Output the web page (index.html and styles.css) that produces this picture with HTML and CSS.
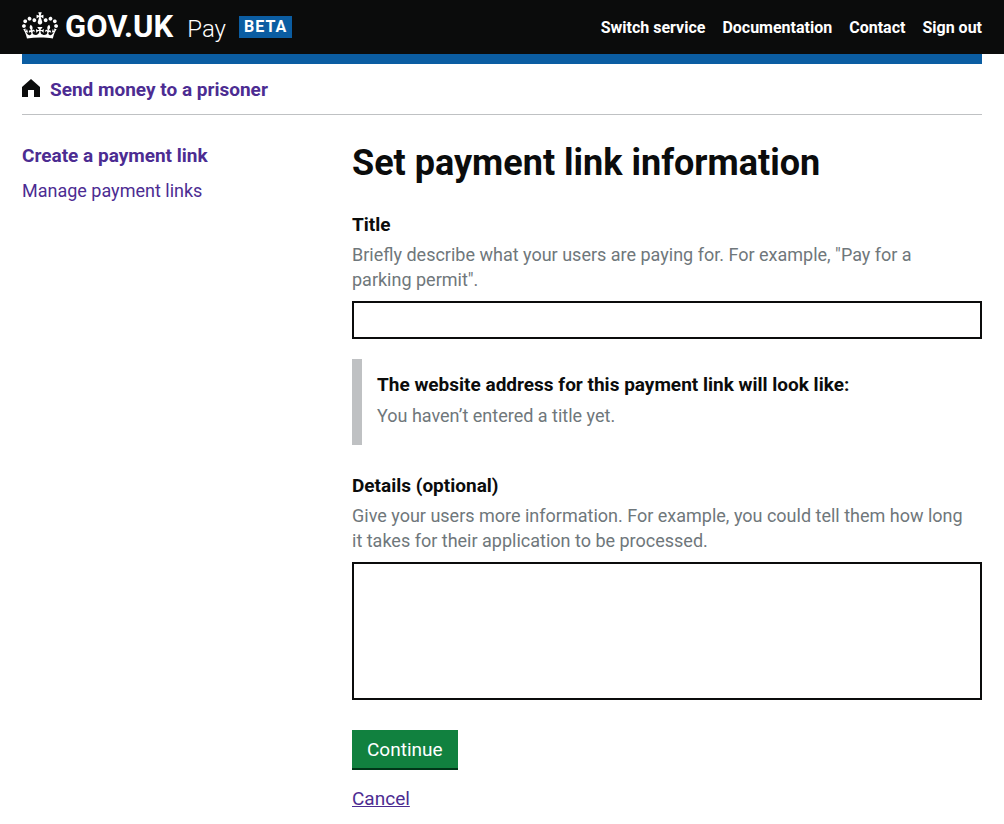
FILE: index.html
```html
<!DOCTYPE html>
<html lang="en">
<head>
<meta charset="utf-8">
<meta name="viewport" content="width=device-width, initial-scale=1">
<title>Set payment link information - GOV.UK Pay</title>
<link rel="stylesheet" href="styles.css">
</head>
<body>
<header class="header">
  <div class="header-inner container">
    <div class="brand">
      <a class="brand-link" href="#">
        <svg class="crown" viewBox="0 0 132 97" aria-hidden="true"><path fill="currentColor" fill-rule="evenodd" d="M25 30.2c3.5 1.5 7.7-.2 9.1-3.7 1.5-3.6-.2-7.8-3.9-9.2-3.6-1.4-7.6.3-9.1 3.9-1.4 3.5.3 7.5 3.9 9zM9 39.5c3.6 1.5 7.8-.2 9.2-3.7 1.5-3.6-.2-7.8-3.9-9.1-3.6-1.5-7.6.2-9.1 3.8-1.4 3.5.3 7.5 3.8 9zM4.4 57.2c3.5 1.5 7.7-.2 9.1-3.8 1.5-3.6-.2-7.7-3.9-9.1-3.5-1.5-7.6.3-9.1 3.8-1.4 3.5.3 7.6 3.9 9.1zm38.3-21.4c3.5 1.5 7.7-.2 9.1-3.8 1.5-3.6-.2-7.7-3.9-9.1-3.6-1.5-7.6.3-9.1 3.8-1.3 3.6.4 7.7 3.9 9.1zm64.4-5.6c-3.6 1.5-7.8-.2-9.1-3.7-1.5-3.6.2-7.8 3.8-9.2 3.6-1.4 7.7.3 9.2 3.9 1.3 3.5-.4 7.5-3.9 9zm15.9 9.3c-3.6 1.5-7.7-.2-9.1-3.7-1.5-3.6.2-7.8 3.7-9.1 3.6-1.5 7.7.2 9.2 3.8 1.5 3.5-.3 7.5-3.8 9zm4.7 17.7c-3.6 1.5-7.8-.2-9.2-3.8-1.5-3.6.2-7.7 3.9-9.1 3.6-1.5 7.7.3 9.2 3.8 1.3 3.5-.4 7.6-3.9 9.1zM89.3 35.8c-3.6 1.5-7.8-.2-9.2-3.8-1.4-3.6.2-7.7 3.9-9.1 3.6-1.5 7.7.3 9.2 3.8 1.4 3.6-.3 7.7-3.9 9.1zM69.7 17.7l8.9 4.7V9.3l-8.9 2.8c-.2-.3-.5-.6-.9-.9L72.4 0H59.6l3.5 11.2c-.3.3-.6.5-.9.9l-8.8-2.8v13.1l8.8-4.7c.3.3.6.7.9.9l-5 15.4v.1c-.2.8-.4 1.6-.4 2.4 0 4.1 3.1 7.5 7 8.1h.2c.3 0 .7.1 1 .1.4 0 .7 0 1-.1h.2c4-.6 7.1-4.1 7.1-8.1 0-.8-.1-1.7-.4-2.4V34l-5.1-15.4c.4-.2.7-.6 1-.9zM66 92.8c16.9 0 32.8 1.1 47.1 3.2 4-16.9 8.9-26.7 14-33.5l-9.6-3.4c1 4.9 1.1 7.2 0 10.2-1.5-1.4-3-4.3-4.2-8.7L108.6 76c2.8-2 5-3.2 7.5-3.3-4.4 9.4-10 11.9-13.6 11.2-4.3-.8-6.3-4.6-5.6-7.9 1-4.7 5.7-5.9 8-.5 4.3-8.7-3-11.4-7.6-8.8 7.1-7.2 7.9-13.5 2.1-21.1-8 6.1-8.1 12.3-4.5 20.8-4.7-5.4-12.1-2.5-9.5 6.2 3.4-5.2 7.9-2 7.2 3.1-.6 4.3-6.4 7.8-13.5 7.2-10.3-.9-10.9-8-11.2-13.8 2.5-.5 7.1 1.8 11 7.3L80.2 60c-4.1 4.4-8 5.3-12.3 5.4 1.4-4.4 8-11.6 8-11.6H55.5s6.4 7.2 7.9 11.6c-4.2-.1-8-1-12.3-5.4l1.4 16.4c3.9-5.5 8.5-7.7 10.9-7.3-.3 5.8-.9 12.8-11.1 13.8-7.2.6-12.9-2.9-13.5-7.2-.7-5 3.8-8.3 7.1-3.1 2.7-8.7-4.6-11.6-9.4-6.2 3.7-8.5 3.6-14.7-4.6-20.8-5.8 7.6-5 13.9 2.2 21.1-4.7-2.6-11.9.1-7.7 8.8 2.3-5.5 7.1-4.2 8.1.5.7 3.3-1.3 7.1-5.7 7.9-3.5.7-9-1.8-13.5-11.2 2.5.1 4.7 1.3 7.5 3.3l-4.7-15.4c-1.2 4.4-2.7 7.2-4.3 8.7-1.1-3-.9-5.3 0-10.2l-9.5 3.4c5 6.9 9.9 16.7 14 33.5 14.8-2.1 30.8-3.2 47.7-3.2z"/></svg>
        <span class="logotype">GOV.UK</span>
        <span class="product">Pay</span>
      </a>
      <strong class="phase">BETA</strong>
    </div>
    <nav class="header-nav" aria-label="Account">
      <a href="#">Switch service</a>
      <a href="#">Documentation</a>
      <a href="#">Contact</a>
      <a href="#">Sign out</a>
    </nav>
  </div>
</header>
<div class="container">
  <div class="service-bar">
    <svg class="home-icon" viewBox="0 0 18 18" aria-hidden="true"><path fill="currentColor" d="M9 0 18 8V18H12V11H6V18H0V8Z"/></svg>
    <a href="#">Send money to a prisoner</a>
  </div>
  <div class="layout">
    <nav class="side-nav" aria-label="Payment links">
      <a class="current" href="#">Create a payment link</a>
      <a href="#">Manage payment links</a>
    </nav>
    <main class="content">
      <h1>Set payment link information</h1>
      <form>
        <div class="field">
          <label for="title">Title</label>
          <p class="hint" id="title-hint">Briefly describe what your users are paying for. For example, "Pay for a parking permit".</p>
          <input class="control" id="title" type="text" aria-describedby="title-hint">
        </div>
        <div class="inset">
          <h2>The website address for this payment link will look like:</h2>
          <p>You haven’t entered a title yet.</p>
        </div>
        <div class="field">
          <label for="details">Details (optional)</label>
          <p class="hint" id="details-hint">Give your users more information. For example, you could tell them how long it takes for their application to be processed.</p>
          <textarea class="control area" id="details" rows="5" aria-describedby="details-hint"></textarea>
        </div>
        <button class="submit" type="button">Continue</button>
        <a class="cancel" href="#">Cancel</a>
      </form>
    </main>
  </div>
</div>
</body>
</html>
```
FILE: styles.css
```css
* {
  box-sizing: border-box;
}

body {
  margin: 0;
  background: #fff;
  color: #0b0c0c;
  font: 18px/25px Roboto, sans-serif;
}

h1,
h2,
p {
  margin: 0;
}

a {
  color: #4c2c92;
  text-decoration: none;
}

.container {
  max-width: 1004px;
  margin: 0 auto;
  padding: 0 22px;
}

.header {
  background: #0b0c0c;
  color: #fff;
}

.header-inner {
  display: flex;
  align-items: center;
  justify-content: space-between;
  height: 54px;
}

.header a {
  color: #fff;
}

.brand,
.brand-link {
  display: flex;
  align-items: center;
}

.crown {
  width: 36px;
  height: 27px;
  margin: 0 7px 4px 0;
}

.logotype {
  font-size: 31px;
  font-weight: 700;
  line-height: 54px;
}

.product {
  margin-left: 14px;
  padding-top: 5px;
  font-size: 24px;
  font-weight: 300;
}

.phase {
  margin-left: 13px;
  padding: 0 5px;
  background: #0b5da2;
  font-size: 16px;
  line-height: 22px;
  letter-spacing: 1px;
}

.header-nav {
  display: flex;
  gap: 17px;
  font-size: 16px;
  font-weight: 700;
}

.service-bar {
  display: flex;
  align-items: center;
  gap: 10px;
  padding: 13px 0 11px;
  border-top: 10px solid #0b5da2;
  border-bottom: 1px solid #bfc1c3;
  font-size: 19px;
  font-weight: 700;
}

.service-bar a {
  line-height: 26px;
}

.home-icon {
  width: 18px;
  height: 18px;
  margin-bottom: 4px;
}

.layout {
  display: grid;
  grid-template-columns: 300px 1fr;
  gap: 30px;
  padding-top: 28px;
}

.side-nav {
  display: flex;
  flex-direction: column;
  gap: 10px;
}

.current {
  font-size: 19px;
  font-weight: 700;
}

h1 {
  margin-bottom: 29px;
  font-size: 36px;
  font-weight: 700;
  line-height: 40px;
}

.field label {
  display: block;
  font-size: 19px;
  font-weight: 700;
}

.hint {
  margin: 5px 0 9px;
  padding-right: 10px;
  color: #6f777b;
}

.control {
  display: block;
  width: 100%;
  height: 38px;
  padding: 5px;
  border: 2px solid #0b0c0c;
  border-radius: 0;
  background: #fff;
  font: inherit;
}

.area {
  height: 138px;
  resize: none;
}

.inset {
  margin: 20px 0 28px;
  padding: 13px 15px 17px;
  border-left: 10px solid #bfc1c3;
}

.inset h2 {
  margin-bottom: 6px;
  font-size: 19px;
  line-height: 25px;
}

.inset p {
  color: #6f777b;
}

.submit {
  display: block;
  margin: 30px 0 18px;
  padding: 7px 15px 6px;
  border: 0;
  background: #11813f;
  box-shadow: 0 2px 0 #003618;
  color: #fff;
  font: inherit;
  font-size: 19px;
}

.cancel {
  display: inline-block;
  margin-bottom: 13px;
  font-size: 19px;
  text-decoration: underline;
}
```
